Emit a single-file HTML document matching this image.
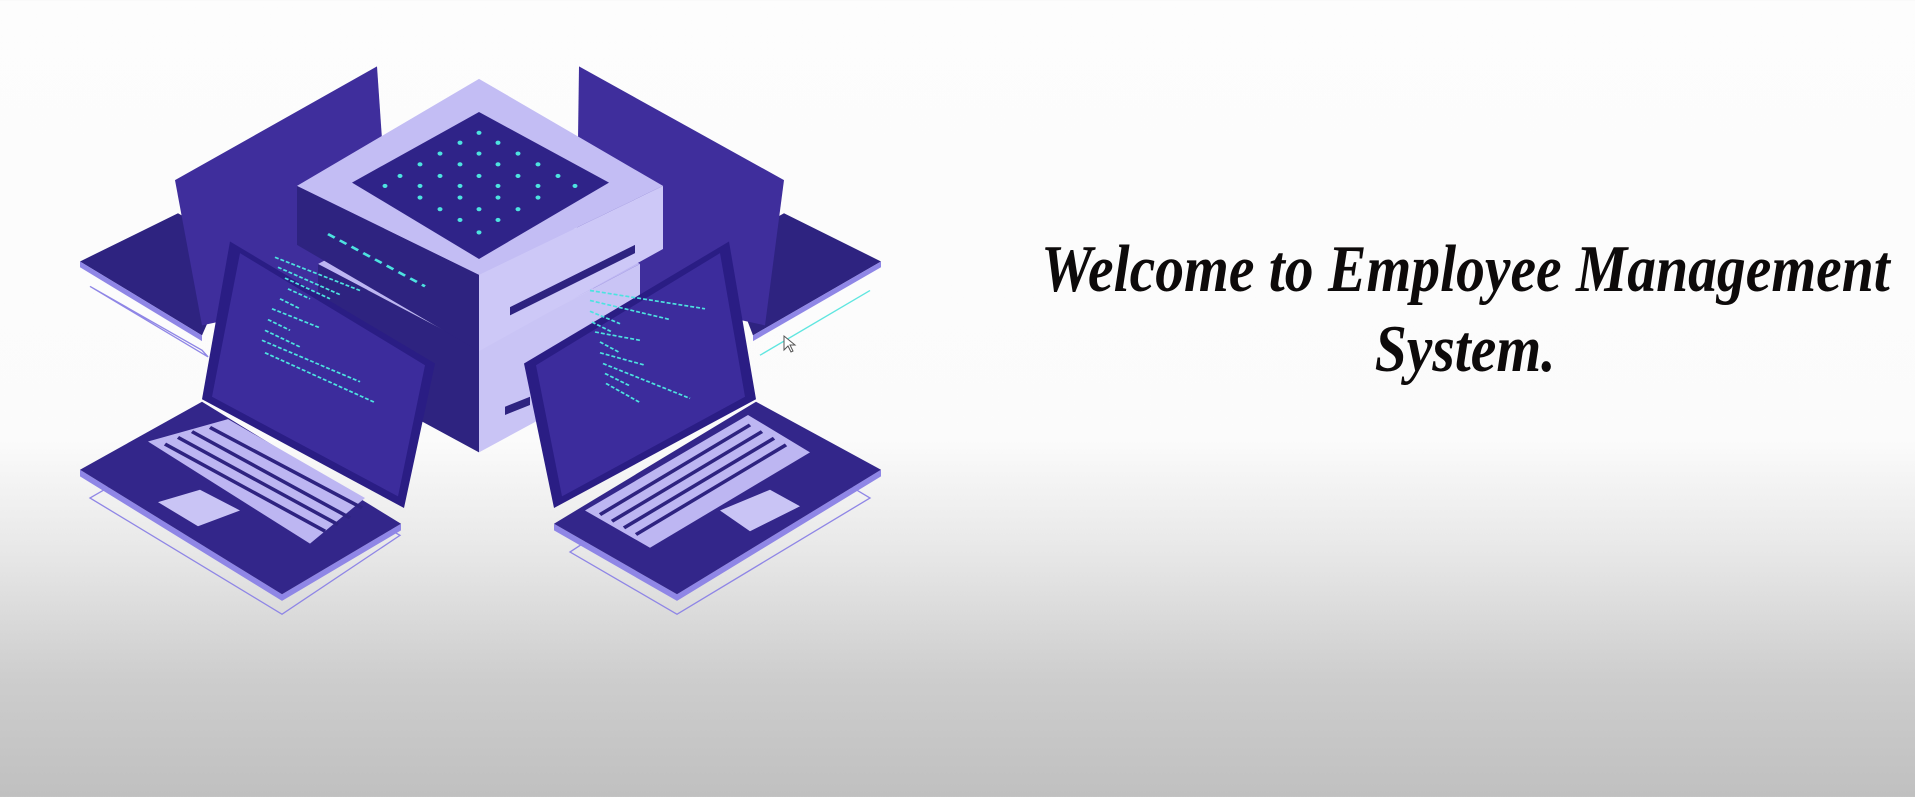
<!DOCTYPE html>
<html><head><meta charset="utf-8"><style>
html,body{margin:0;padding:0}
body{width:1915px;height:797px;overflow:hidden;position:relative;
background:linear-gradient(to bottom,#fdfdfd 0px,#fbfbfb 440px,#e6e6e6 560px,#cdcdcd 680px,#c0c0c0 797px);}
svg{position:absolute;left:0;top:0}
.t{position:absolute;left:915px;width:1100px;text-align:center;font-family:"Liberation Serif",serif;font-style:italic;font-weight:bold;color:#0d0a0a;font-size:67px;white-space:nowrap}
.t span{display:inline-block;transform:scaleX(0.86);transform-origin:center}
</style></head><body>
<svg width="960" height="797" viewBox="0 0 960 797">
<g transform="scale(1,0.83)">
<polygon points="80,315 178,257 240,300 202,404" fill="#2e2380"/>
<polygon points="80,315 80,322 202,411 202,404" fill="#8f86e6"/>
<polygon points="90,345 202,422 208,430" fill="none" stroke="#8f86e6" stroke-width="1.5"/>
<polygon points="175,217 377,80 392,343 202,392" fill="#3f2e9c"/>
<polygon points="881,315 784,257 720,300 753,404" fill="#2e2380"/>
<polygon points="881,315 881,322 753,411 753,404" fill="#8f86e6"/>
<path d="M870,350 L760,428" stroke="#5fe6e0" stroke-width="1.5"/>
<polygon points="579,80 784,217 765,392 576,343" fill="#3f2e9c"/>
<polygon points="318,318 479,215 640,318 479,420" fill="#bdb6f2"/>
<polygon points="318,318 479,420 479,545 318,440" fill="#2e2380"/>
<polygon points="479,420 640,318 640,440 479,545" fill="#c9c4f5"/>
<polygon points="505,490 530,478 530,488 505,500" fill="#2e2380"/>
<polygon points="297,224 479,331 479,423 297,295" fill="#2e2380"/>
<polygon points="479,331 663,224 663,300 479,423" fill="#cdc8f7"/>
<polygon points="297,224 479,95 663,224 479,331" fill="#c3bdf4"/>
<polygon points="352,220 479,135 609,220 479,312" fill="#2f2388"/>
<polygon points="510,370 635,295 635,305 510,380" fill="#2e2380"/>
<g stroke="#4de3e0" stroke-width="3" stroke-dasharray="8 6">
<path d="M328,282 L425,345"/>
</g>
<g fill="#4de3e0">
<circle cx="479" cy="160" r="2.5"/><circle cx="460" cy="172" r="2.5"/><circle cx="498" cy="172" r="2.5"/>
<circle cx="440" cy="185" r="2.5"/><circle cx="479" cy="185" r="2.5"/><circle cx="518" cy="185" r="2.5"/>
<circle cx="420" cy="198" r="2.5"/><circle cx="460" cy="198" r="2.5"/><circle cx="498" cy="198" r="2.5"/><circle cx="538" cy="198" r="2.5"/>
<circle cx="400" cy="212" r="2.5"/><circle cx="440" cy="212" r="2.5"/><circle cx="479" cy="212" r="2.5"/><circle cx="518" cy="212" r="2.5"/><circle cx="558" cy="212" r="2.5"/>
<circle cx="385" cy="224" r="2.5"/><circle cx="420" cy="224" r="2.5"/><circle cx="460" cy="224" r="2.5"/><circle cx="498" cy="224" r="2.5"/><circle cx="538" cy="224" r="2.5"/><circle cx="575" cy="224" r="2.5"/>
<circle cx="420" cy="238" r="2.5"/><circle cx="460" cy="238" r="2.5"/><circle cx="498" cy="238" r="2.5"/><circle cx="538" cy="238" r="2.5"/>
<circle cx="440" cy="252" r="2.5"/><circle cx="479" cy="252" r="2.5"/><circle cx="518" cy="252" r="2.5"/>
<circle cx="460" cy="265" r="2.5"/><circle cx="498" cy="265" r="2.5"/><circle cx="479" cy="280" r="2.5"/>
</g>
<polygon points="90,600 212,515 400,645 282,740" fill="none" stroke="#8f86e6" stroke-width="1.5"/>
<polygon points="80,566 80,574 282,724 401,639 401,631 282,716" fill="#8f86e6"/>
<polygon points="80,566 202,484 401,631 282,716" fill="#33268a"/>
<polygon points="148,532 228,505 365,600 310,655" fill="#bdb6f2"/>
<g stroke="#2e2380" stroke-width="4">
<path d="M165,535 L325,640"/><path d="M178,527 L338,632"/><path d="M192,520 L350,624"/><path d="M210,515 L362,612"/>
</g>
<polygon points="158,605 200,590 240,615 198,634" fill="#c9c4f5"/>
<polygon points="230,291 435,438 404,612 202,481" fill="#2a1d84"/>
<polygon points="240,305 425,440 398,598 212,478" fill="#3c2c9c"/>
<g stroke="#4de3e0" stroke-width="2" stroke-dasharray="4 2">
<path d="M275,310 L360,350"/><path d="M278,322 L340,355"/><path d="M285,335 L330,360"/><path d="M288,348 L310,360"/>
<path d="M280,360 L300,372"/><path d="M272,372 L320,395"/><path d="M268,385 L290,398"/><path d="M265,398 L300,418"/><path d="M262,410 L360,460"/><path d="M265,425 L375,485"/>
</g>
<polygon points="570,665 756,518 870,600 677,740" fill="none" stroke="#8f86e6" stroke-width="1.5"/>
<polygon points="881,566 881,574 677,724 554,639 554,631 677,716" fill="#8f86e6"/>
<polygon points="881,566 756,484 554,631 677,716" fill="#33268a"/>
<polygon points="585,615 748,500 810,545 650,660" fill="#bdb6f2"/>
<g stroke="#2e2380" stroke-width="4">
<path d="M600,620 L750,512"/><path d="M612,628 L762,520"/><path d="M624,636 L774,528"/><path d="M636,644 L786,536"/>
</g>
<polygon points="720,615 770,590 800,610 750,640" fill="#c9c4f5"/>
<polygon points="729,291 756,481 554,612 524,438" fill="#2a1d84"/>
<polygon points="720,305 745,478 562,598 536,440" fill="#3c2c9c"/>
<g stroke="#4de3e0" stroke-width="2" stroke-dasharray="4 2">
<path d="M590,350 L705,372"/><path d="M590,362 L670,385"/><path d="M590,375 L620,390"/><path d="M592,388 L612,400"/>
<path d="M595,400 L640,410"/><path d="M600,412 L620,425"/><path d="M600,425 L645,440"/><path d="M603,438 L690,480"/><path d="M605,450 L630,465"/><path d="M606,462 L640,485"/>
</g>
</g>
<path d="M784,336 l0,14 l4,-4 l3,6 l2,-1 l-3,-6 l5,0 z" fill="#fff" stroke="#555" stroke-width="1"/>
</svg>
<div class="t" style="top:231px"><span>Welcome to Employee Management</span></div>
<div class="t" style="top:311px"><span>System.</span></div>
</body></html>
